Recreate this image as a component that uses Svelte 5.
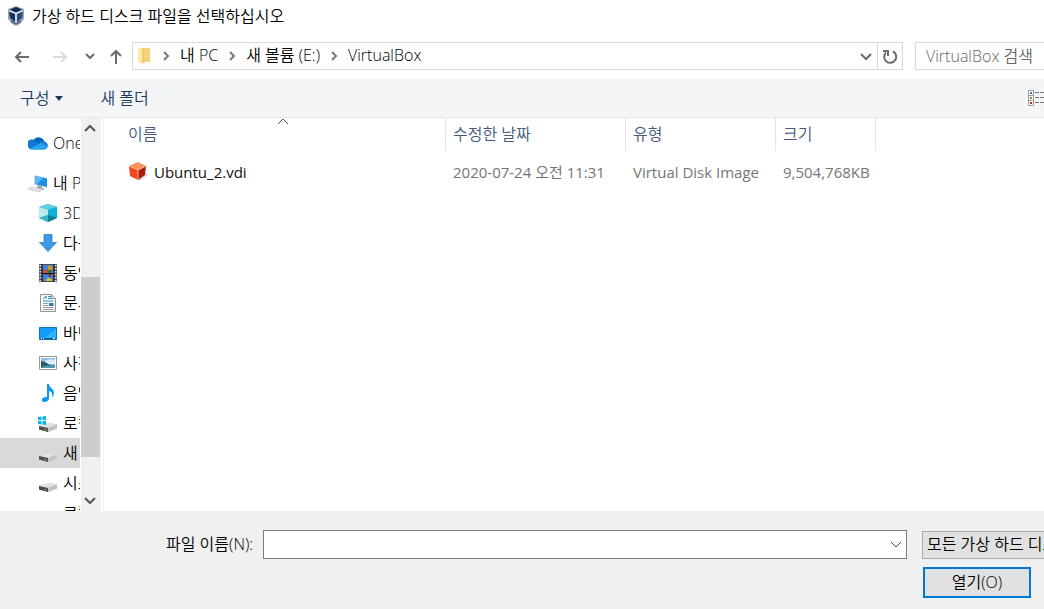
<script>
  const crumbs = ["내 PC", "새 볼륨 (E:)", "VirtualBox"];

  const places = [
    { icon: "cloud", name: "OneDrive", root: true },
    { icon: "pc", name: "내 PC", root: true },
    { icon: "cube", name: "3D 개체" },
    { icon: "download", name: "다운로드" },
    { icon: "video", name: "동영상" },
    { icon: "document", name: "문서" },
    { icon: "desktop", name: "바탕 화면" },
    { icon: "picture", name: "사진" },
    { icon: "music", name: "음악" },
    { icon: "windows", name: "로컬 디스크 (C:)" },
    { icon: "drive", name: "새 볼륨 (E:)" },
    { icon: "drive", name: "시스템 예약" },
    { icon: "", name: "로컬 디스크" }
  ];

  const files = [
    {
      name: "Ubuntu_2.vdi",
      date: "2020-07-24 오전 11:31",
      type: "Virtual Disk Image",
      size: "9,504,768KB"
    }
  ];

  let selected = $state(10);
  let filename = $state("");
</script>

{#snippet chevron(d, size, width)}
  <svg width={size} height={size} viewBox="0 0 12 12" fill="none" stroke="currentColor" stroke-width={width} aria-hidden="true">
    <path {d} />
  </svg>
{/snippet}

{#snippet drive()}
  <path d="M1 13 11 10l8 1.500v4L10 19 1 16.500z" fill="#b5b6b9" />
  <path d="M1 13 11 10l8 1.500-9 3.500z" fill="#e2e3e6" />
  <path d="M1 13l9 2v4l-9-2.500z" fill="#4c4e50" />
  <path d="M10 15l9-3.500v4L10 19z" fill="#c2c3c7" />
  <path d="M6.500 16.500l2 .5" stroke="#63c85b" />
{/snippet}

{#snippet placeIcon(kind)}
  <svg class="icon" viewBox="0 0 20 20" aria-hidden="true">
    {#if kind === "cloud"}
      <path d="M5 9a6 6 0 0 1 11-1 5 5 0 0 1 0 8.500H4A4 4 0 0 1 2 9z" fill="#1490df" />
      <path d="M5.500 7a6 6 0 0 1 10.500 1l-5 3z" fill="#0364b8" />
      <path d="M12 9.500A5 5 0 0 1 20 12l-1 3-8-4z" fill="#1883d9" />
      <path d="M2 15.500 13 10l6.500 4.500q-1 2-3.500 2H4q-1 0-2-1z" fill="#28a8ea" />
      <path d="M0 12.500A4 4 0 0 1 7 8.500l5 2-10 5q-2-1-2-3z" fill="#0f78d4" />
    {:else if kind === "pc"}
      <path d="M6 2l13 3v10L6 11.500z" fill="#cfd8df" />
      <path d="M7 3l12 2.500v8.500L7 11z" fill="#1b8ee6" />
      <path d="M7 3l8 2-6 6-2-.5z" fill="#59b9f6" />
      <path d="M10 12l4 1v2l3 1-2 1-6-2z" fill="#9aa3ab" />
      <path d="M0 16l3-2 11 2-3 3z" fill="#dfe1e3" stroke="#b8bbbe" stroke-width=".5" />
    {:else if kind === "cube"}
      <path d="M1 4l9-3 9 3v11l-9 4-9-4z" fill="#10b2d5" />
      <path d="M1 4l9-3 9 3-9 3z" fill="#5fcfdf" />
      <path d="M1 4l9 3v5l-9 3z" fill="#b9eef1" />
      <path d="M10 7l9-3v11l-9-3z" fill="#0fb0d6" />
      <path d="M1 15l9-3v7z" fill="#3bb5c4" />
      <path d="M10 12l9 3-9 4z" fill="#087f94" />
    {:else if kind === "download"}
      <path d="M6 1.500h8v8h4.500L10 18.500 1.500 9.500H6z" fill="#3c99e8" stroke="#2179c6" stroke-width=".7" />
    {:else if kind === "video"}
      <path d="M1 1h18v18H1z" fill="#4e5051" />
      <path d="M2.500 2v17M17.500 2v17" stroke="#e4e4e4" stroke-width="2" stroke-dasharray="1.500 1.500" />
      <path d="M5 2h10v8H5zM5 11.500h10V18H5z" fill="#447fdb" />
      <circle cx="12" cy="5" r="2.500" fill="#c99e1b" />
      <path d="M5 7h4l1 3H5z" fill="#d44949" />
      <path d="M9 7h5l-1 3h-3z" fill="#39712e" />
      <path d="M8 18a3 3 0 0 1 6 0z" fill="#dec21f" />
      <path d="M10 11.500h4l-2 3z" fill="#8b291f" />
      <path d="M4 1v18M16 1v18M4 10.500h12" stroke="#101928" />
    {:else if kind === "document"}
      <path d="M2.500 1.500h11l4 4v13h-15z" fill="#fafafa" stroke="#929292" />
      <path d="M13.500 1.500v4h4" fill="#ddd" stroke="#929292" />
      <path d="M5 6l3-3v3M10 3.500h3M10 5.500h3M5 8h10.500" stroke="#238dc8" fill="none" />
      <path d="M5 10.500h5M5 12.500h5M5 14.500h10.500M5 16.500h10.500" stroke="#9b9b9b" />
      <path d="M11 10h4.500v3H11z" fill="#327c99" />
    {:else if kind === "desktop"}
      <path d="M1.500 4.500h17v12h-17z" fill="#139cff" stroke="#0874b9" />
      <path d="M6 15L18 6v9z" fill="#31b1ff" />
      <path d="M2 15.500h16" stroke="#07568f" />
      <path d="M3 15.500h1M5 15.500h1M15 15.500h2" stroke="#fff" />
    {:else if kind === "picture"}
      <path d="M1.500 3.500h17v13h-17z" fill="#fff" stroke="#989898" />
      <path d="M3 5h14v10H3z" fill="#8bc1ee" />
      <path d="M7 8q3-3 10-1v4H7z" fill="#dbeef8" />
      <path d="M3 8l4 1 5 3h5v3H3z" fill="#285f62" />
      <path d="M5 13l12-1v3H3z" fill="#5696ae" />
    {:else if kind === "music"}
      <path d="M9 1h2c0 4 5 4 5 9 0 2-1 4-2 5 1-4 0-6-3-7v7c0 3-3 4-5 4-2.500 0-3-3-1-4 1-1 3-1 4-1z" fill="#0c9bf7" />
    {:else if kind}
      {@render drive()}
      {#if kind === "windows"}
        <path d="M0 4l3.500-.5V7H0zM4.500 3.500 8 3v4H4.500zM0 8h3.500v3.500L0 11zM4.500 8H8v4l-3.500-.5z" fill="#00b4ec" />
      {/if}
    {/if}
  </svg>
{/snippet}

<div class="dialog">
  <header class="title">
    <svg width="18" height="20" viewBox="0 0 18 20" aria-hidden="true">
      <path d="M1 3 9 0l8 3v10l-4 5-4 2-4-2-4-5z" fill="#98a5bf" />
      <path d="M2 4l7-3 7 3-7 3z" fill="#162e57" />
      <path d="M2 5l6 3v8l-5-4z" fill="#17345f" />
      <path d="M10 8l6-3-1 7-5 4z" fill="#24497b" />
      <path d="M2 4.500l7 3 7-3M9 7v10" fill="none" stroke="#dfe8f3" stroke-width="1.500" />
      <path d="M4 15l5 3 5-3" fill="none" stroke="#4f6285" stroke-width="1.500" />
    </svg>
    <span>가상 하드 디스크 파일을 선택하십시오</span>
  </header>

  <nav class="nav">
    <div class="history">
      <button aria-label="뒤로">
        <svg width="16" height="14" viewBox="0 0 16 14"><path d="M15 7H2M7 2 2 7l5 5" /></svg>
      </button>
      <button aria-label="앞으로" class="off" disabled>
        <svg width="16" height="14" viewBox="0 0 16 14"><path d="M1 7h13M9 2l5 5-5 5" /></svg>
      </button>
      <button aria-label="최근 위치" class="recent">{@render chevron("M2 3l4 4 4-4", 12, 2)}</button>
      <button aria-label="위로" class="up">
        <svg width="14" height="16" viewBox="0 0 14 16"><path d="M7 15V2M2 7l5-5 5 5" /></svg>
      </button>
    </div>
    <div class="address">
      <svg class="folder" width="14" height="18" viewBox="0 0 14 18" aria-hidden="true">
        <path d="M3 1h9v14H3z" fill="#f5d377" />
        <path d="M0 1h2l3 3v13l-5-2z" fill="#ffe9a6" />
        <path d="M5 3v13" stroke="#e5b846" />
      </svg>
      {#each crumbs as crumb}
        <span class="sep">{@render chevron("M4 2l4 4-4 4", 12, 2)}</span>
        <button class="crumb">{crumb}</button>
      {/each}
      <button class="drop" aria-label="이전 위치">{@render chevron("M1 4l5 5 5-5", 12, 2)}</button>
      <button class="refresh" aria-label="새로 고침">
        <svg width="16" height="16" viewBox="0 0 16 16">
          <path d="M11 3.500A6 6 0 1 1 4 4.500" />
          <path d="M1 3h5v5" />
        </svg>
      </button>
    </div>
    <input class="search" type="text" placeholder="VirtualBox 검색" aria-label="VirtualBox 검색" />
  </nav>

  <div class="toolbar">
    <button>구성 <svg width="8" height="5" viewBox="0 0 8 5" aria-hidden="true"><path d="M0 0h8L4 5z" fill="currentColor" /></svg></button>
    <button>새 폴더</button>
    <button class="view" aria-label="보기 변경">
      <svg width="16" height="16" viewBox="0 0 16 16" fill="none">
        <path d="M.5.5h5v15h-5zM.5 5.500h5M.5 10.500h5" fill="#fff" stroke="#999" />
        <path d="M7 2.500h4M12 2.500h4M7 7.500h4M12 7.500h4M7 12.500h4M12 12.500h4" stroke="#777" />
        <path d="M2 3h2" stroke="#2e80b5" stroke-width="2" />
        <path d="M2 8h2" stroke="#c56b32" stroke-width="2" />
        <path d="M2 13h2" stroke="#cb1d13" stroke-width="2" />
      </svg>
    </button>
  </div>

  <main class="body">
    <aside class="places">
      <ul>
        {#each places as place, i}
          <li>
            <button class:root={place.root} class:selected={selected === i} onclick={() => (selected = i)}>
              {@render placeIcon(place.icon)}
              <span>{place.name}</span>
            </button>
          </li>
        {/each}
      </ul>
    </aside>
    <div class="scroll">
      <button aria-label="위로 스크롤">{@render chevron("M1 9l5-5 5 5", 12, 2)}</button>
      <div class="track"><div class="thumb"></div></div>
      <button aria-label="아래로 스크롤">{@render chevron("M1 3l5 5 5-5", 12, 2)}</button>
    </div>
    <section class="files">
      <table>
        <thead>
          <tr>
            <th class="name">이름 <span class="sort">{@render chevron("M1 8l5-5 5 5", 12, 1)}</span></th>
            <th class="date">수정한 날짜</th>
            <th class="type">유형</th>
            <th class="size">크기</th>
          </tr>
        </thead>
        <tbody>
          {#each files as file}
            <tr>
              <td class="name">
                <div class="file">
                  <svg width="20" height="20" viewBox="0 0 20 20" aria-hidden="true">
                    <path d="M10 18l9-7 1 2-8 5z" fill="#ded5d2" />
                    <path d="M1 4l9-4 8 4-8 4z" fill="#fb905b" />
                    <path d="M1 4l9 4v10l-8-4z" fill="#ed4a20" />
                    <path d="M10 8l8-4-1 9-7 5z" fill="#ad1c08" />
                    <path d="M1 4l9 4 8-4M10 8v9" fill="none" stroke="#ffb58a" />
                  </svg>
                  <span>{file.name}</span>
                </div>
              </td>
              <td>{file.date}</td>
              <td>{file.type}</td>
              <td class="num">{file.size}</td>
            </tr>
          {/each}
        </tbody>
      </table>
    </section>
  </main>

  <footer class="footer">
    <div class="row">
      <label for="filename">파일 이름(N):</label>
      <div class="combo">
        <input id="filename" type="text" bind:value={filename} />
        <button aria-label="파일 이름 목록">{@render chevron("M1 3l5 5 5-5", 12, 1)}</button>
      </div>
      <select aria-label="파일 형식">
        <option>모든 가상 하드 디스크 파일</option>
      </select>
    </div>
    <button class="open">열기(O)</button>
  </footer>
</div>

<style>
  :global(body) {
    margin: 0;
    overflow: hidden;
  }

  .dialog {
    display: flex;
    flex-direction: column;
    height: 100vh;
    background: #fff;
    color: #000;
    font: 350 16px/20px "Open Sans", "Noto Sans CJK KR", sans-serif;
  }

  button,
  input,
  select {
    box-sizing: border-box;
    margin: 0;
    padding: 0;
    border: 0;
    border-radius: 0;
    background: none;
    color: inherit;
    font: inherit;
  }

  svg {
    display: block;
    flex: none;
  }

  .title {
    display: flex;
    align-items: center;
    gap: 7px;
    height: 32px;
    padding-left: 7px;
  }

  .nav {
    display: flex;
    align-items: center;
    height: 47px;
  }

  .history {
    display: flex;
    align-items: center;
    width: 132px;
    box-sizing: border-box;
    padding: 3px 0 0 14px;
    color: #6c6c6c;
  }

  .history button {
    margin-right: 22px;
  }

  .history button.off {
    margin-right: 16px;
    color: #dcdcdc;
  }

  .history button.recent {
    margin-right: 13px;
  }

  .history button.up {
    margin: 0;
  }

  .history svg,
  .refresh svg {
    fill: none;
    stroke: currentColor;
    stroke-width: 2;
  }

  .address {
    display: flex;
    flex: 1;
    align-items: center;
    box-sizing: border-box;
    height: 28px;
    padding-left: 5px;
    border: 1px solid #d9d9d9;
  }

  .sep {
    margin: 0 8px;
    color: #777;
  }

  .crumb {
    padding-bottom: 1px;
  }

  .drop {
    margin-left: auto;
    padding: 0 5px;
    color: #6c6c6c;
  }

  .refresh {
    align-self: stretch;
    padding: 0 4px;
    border-left: 1px solid #d9d9d9;
    color: #6c6c6c;
  }

  .search {
    width: 129px;
    height: 28px;
    margin-left: 12px;
    padding-left: 10px;
    border: 1px solid #d9d9d9;
    border-right: 0;
    outline: 0;
  }

  .search::placeholder {
    color: #666;
    opacity: 1;
  }

  .toolbar {
    display: flex;
    align-items: center;
    gap: 37px;
    height: 38px;
    padding-left: 20px;
    border-bottom: 1px solid #e6e8ea;
    background: #f4f5f7;
    color: #1b3763;
  }

  .toolbar button {
    display: flex;
    align-items: center;
    gap: 6px;
  }

  .toolbar .view {
    margin-left: auto;
  }

  .body {
    display: flex;
    flex: 1;
    min-height: 0;
  }

  .places {
    width: 80px;
    overflow: hidden;
  }

  .places ul {
    margin: 0;
    padding: 10px 0 0;
    list-style: none;
  }

  .places li:first-child {
    margin-bottom: 10px;
  }

  .places button {
    display: flex;
    align-items: center;
    gap: 5px;
    width: 100%;
    height: 30px;
    padding-left: 38px;
    overflow: hidden;
    white-space: nowrap;
  }

  .places button.root {
    padding-left: 28px;
  }

  .places button.selected {
    background: #d9d9d9;
  }

  .icon {
    width: 20px;
    height: 20px;
  }

  .scroll {
    display: flex;
    flex-direction: column;
    width: 20px;
    margin-left: 1px;
    background: #f0f0f0;
    color: #555;
  }

  .scroll button {
    display: grid;
    place-items: center;
    height: 20px;
    padding-right: 2px;
  }

  .track {
    flex: 1;
    padding-right: 1px;
  }

  .thumb {
    height: 51%;
    margin-top: 139px;
    background: #cdcdcd;
  }

  .files {
    flex: 1;
    min-width: 0;
    margin-left: 2px;
    border-left: 1px solid #f2f2f2;
  }

  table {
    border-collapse: separate;
    border-spacing: 0;
    table-layout: fixed;
    width: 772px;
  }

  th {
    position: relative;
    box-sizing: border-box;
    height: 33px;
    padding: 0 0 2px 7px;
    border-right: 1px solid #e5e5e5;
    color: #445a78;
    font-weight: 350;
    text-align: left;
  }

  th.name {
    width: 342px;
  }

  th.date {
    width: 180px;
  }

  th.type {
    width: 150px;
  }

  th.size {
    width: 100px;
  }

  .sort {
    position: absolute;
    top: -2px;
    left: calc(50% + 2px);
  }

  td {
    height: 42px;
    padding: 0 0 0 7px;
    color: #757575;
    font-size: 15px;
    font-weight: 400;
    white-space: nowrap;
  }

  th.name,
  td.name {
    padding-left: 24px;
  }

  td.name {
    color: #111;
  }

  td.num {
    padding-right: 7px;
    text-align: right;
  }

  .file {
    display: flex;
    align-items: center;
    gap: 6px;
  }

  .footer {
    display: flex;
    flex-direction: column;
    box-sizing: border-box;
    height: 98px;
    padding-top: 19px;
    background: #f0f0f0;
  }

  .row {
    display: flex;
    align-items: center;
    padding-left: 166px;
  }

  .row label {
    width: 97px;
    padding-bottom: 2px;
  }

  .combo {
    display: flex;
    flex: 1;
    box-sizing: border-box;
    height: 29px;
    border: 1px solid #7a7a7a;
    background: #fff;
  }

  .combo input {
    flex: 1;
    min-width: 0;
    padding: 0 4px;
    outline: 0;
  }

  .combo button {
    padding: 0 4px;
    color: #444;
  }

  .row select {
    width: 122px;
    height: 28px;
    margin-left: 15px;
    padding: 0 0 2px 4px;
    border: 1px solid #adadad;
    border-right: 0;
    appearance: none;
    background: #e1e1e1;
    text-overflow: clip;
  }

  .open {
    align-self: flex-end;
    width: 108px;
    height: 31px;
    margin: 8px 13px 0 0;
    padding-bottom: 2px;
    border: 2px solid #0078d7;
    background: #e1e1e1;
  }
</style>
